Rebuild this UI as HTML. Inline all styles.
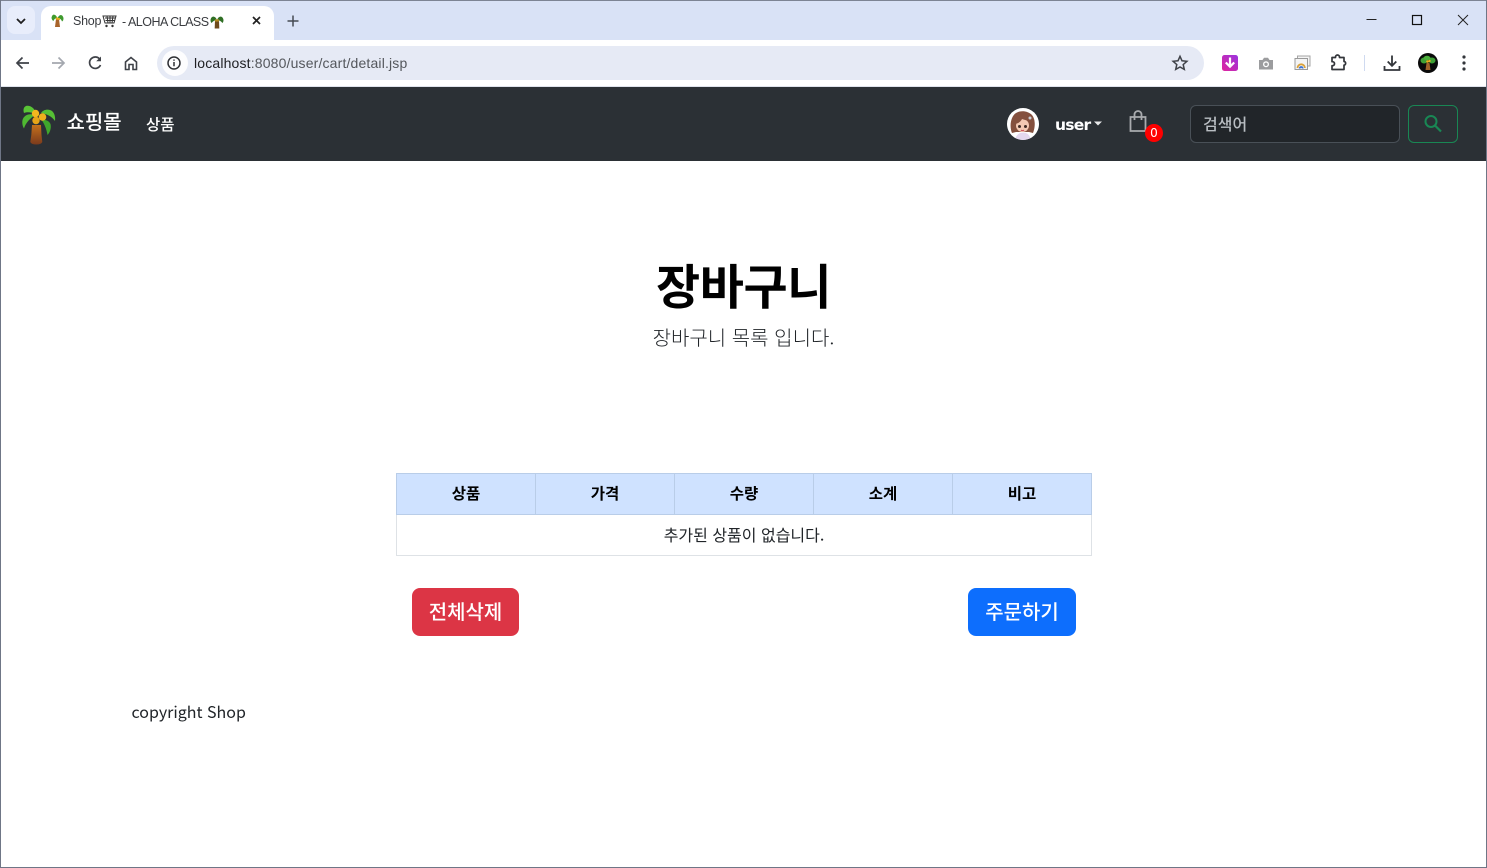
<!DOCTYPE html>
<html lang="ko"><head><meta charset="utf-8"><title>Shop - ALOHA CLASS</title>
<style>
*{box-sizing:border-box}
html,body{margin:0;padding:0;width:1487px;height:868px;overflow:hidden;background:#fff}
body{position:relative;font-family:"Liberation Sans","Noto Sans CJK KR",sans-serif;color:#212529}
.a{position:absolute;white-space:nowrap}
.k{font-family:"Noto Sans CJK KR","Liberation Sans",sans-serif}
svg{position:absolute;overflow:visible}
.th{position:absolute;top:474px;height:40px;width:139px;background:#cfe2ff;border-right:1px solid #b9cde8;text-align:center;font:700 15.5px/39px "Noto Sans CJK KR",sans-serif;color:#000}
.btn{position:absolute;top:588px;height:48px;border-radius:8px;color:#fff;text-align:center;font:500 20px/46px "Noto Sans CJK KR",sans-serif}
</style></head><body>
<!-- chrome top -->
<div class="a" style="left:0;top:0;width:1487px;height:40px;background:#d9e2f6"></div>
<div class="a" style="left:0;top:0;width:1487px;height:1px;background:#7d8494"></div>
<div class="a" style="left:7px;top:6px;width:28px;height:28px;border-radius:8px;background:#e8edfb"></div>
<svg style="left:0;top:0" width="60" height="40"><path d="M17 19l4 4 4-4" fill="none" stroke="#1f1f1f" stroke-width="1.8"/></svg>
<div class="a" style="left:41px;top:6px;width:233px;height:36px;background:#fff;border-radius:10px 10px 0 0"></div>
<svg style="left:51px;top:13px" width="13" height="15" viewBox="0 0 13 15"><path d="M5 6h3l1 8H4z" fill="#a8642a"/><path d="M6.500 5C4 0 1 1 .5 5 1 7 2 8 2.500 8 3 6 5 5 6.500 5zM6.500 5c2-4 5-4 6 0 0 2-.5 3-1.500 3.500C10.500 6.500 8.500 5 6.500 5z" fill="#3f9a2e"/><circle cx="6" cy="5.500" r="1.300" fill="#e6ad1f"/><circle cx="8" cy="6" r="1.100" fill="#e6ad1f"/></svg>
<div class="a" style="left:73px;top:13px;font-size:12.5px;line-height:16px;color:#3a3c40;letter-spacing:-.25px">Shop</div>
<svg style="left:102px;top:15px" width="15" height="13" viewBox="0 0 15 13"><path d="M1 1h13l-2 7H3zM3 3h10M3.500 5.500h9M5 1l1 7M8 1v7M11 1l-1 7" fill="none" stroke="#333" stroke-width="1"/><circle cx="4.500" cy="11" r="1.200" fill="#333"/><circle cx="10.500" cy="11" r="1.200" fill="#333"/></svg>
<div class="a" style="left:122px;top:14px;font-size:12.5px;line-height:16px;color:#3a3c40;letter-spacing:-.5px">- ALOHA CLASS</div>
<svg style="left:210px;top:15px" width="14" height="14" viewBox="0 0 14 14"><path d="M5 5h4l.3 8.500H4.700z" fill="#6e4a1c"/><path d="M7 5C5 0 1 1 .5 5c0 1.500 .5 2.500 1 3C3 6 5 5 7 5c2 0 4 1 5.500 3 .5-.5 1-1.500 1-3C13 1 9 0 7 5z" fill="#2f6f25"/><circle cx="6" cy="5.500" r="1.200" fill="#b48a20"/><circle cx="8" cy="5.500" r="1.200" fill="#b48a20"/></svg>
<svg style="left:250px;top:14px" width="13" height="13"><path d="M3 3l7 7M10 3l-7 7" stroke="#222" stroke-width="1.700"/></svg>
<svg style="left:286px;top:14px" width="14" height="14"><path d="M7 1.500v11M1.500 7h11" stroke="#454a52" stroke-width="1.500"/></svg>
<svg style="left:1360px;top:10px" width="120" height="20"><path d="M6.500 9.500h10" stroke="#222" stroke-width="1"/><rect x="52.500" y="5.500" width="9" height="9" fill="none" stroke="#111" stroke-width="1.200"/><path d="M98 5l10 10M108 5l-10 10" stroke="#222" stroke-width="1"/></svg>
<!-- toolbar -->
<div class="a" style="left:0;top:40px;width:1487px;height:47px;background:#fff;border-radius:9px 9px 0 0"></div>
<div class="a" style="left:0;top:86px;width:1487px;height:1px;background:#dfe3ec"></div>
<svg style="left:14px;top:53px" width="130" height="20" fill="none"><path d="M15 10H3M8.500 4.500L3 10l5.500 5.500" stroke="#3f4248" stroke-width="1.700"/><path d="M38 10h12M44.500 4.500L50 10l-5.500 5.500" stroke="#a4a8af" stroke-width="1.700"/><path d="M86 6.500A5.700 5.700 0 1 0 86.500 12" stroke="#3f4248" stroke-width="1.700"/><path d="M87 3.500v4.800h-4.800z" fill="#3f4248"/><path d="M111.500 16.500V9l5.500-4.500L122.500 9v7.500h-3.500V11.500h-4v5z" stroke="#3f4248" stroke-width="1.600"/></svg>
<div class="a" style="left:157px;top:46px;width:1047px;height:34px;border-radius:17px;background:#e6eaf5"></div>
<div class="a" style="left:162px;top:50px;width:26px;height:26px;border-radius:13px;background:#fdfdfe"></div>
<svg style="left:166px;top:55px" width="16" height="16"><circle cx="8" cy="8" r="6" fill="none" stroke="#2f3135" stroke-width="1.500"/><path d="M8 7v4.200M8 4.500v1.300" stroke="#2f3135" stroke-width="1.500"/></svg>
<div class="a" style="left:194px;top:54px;font-size:14px;line-height:18px;color:#202124;letter-spacing:.16px">localhost<span style="color:#54575c">:8080/user/cart/detail.jsp</span></div>
<svg style="left:1171px;top:54px" width="18" height="18"><path d="M9 2.300l2 4.500 4.900.5-3.700 3.300 1.100 4.800L9 13l-4.300 2.400 1.100-4.800L2.100 7.300 7 6.800z" fill="none" stroke="#3f4248" stroke-width="1.500"/></svg>
<svg style="left:1222px;top:55px" width="16" height="16"><defs><linearGradient id="g" x1="0" y1="1" x2="1" y2="0"><stop offset="0" stop-color="#e0259c"/><stop offset="1" stop-color="#9a35e0"/></linearGradient></defs><rect width="16" height="16" rx="2.500" fill="url(#g)"/><path d="M8 2.500v9M3.800 7.500L8 11.700l4.200-4.200" fill="none" stroke="#fff" stroke-width="2.200"/></svg>
<svg style="left:1258px;top:55px" width="16" height="16"><path d="M1 5h3.500L6 2.800h4L11.500 5H15v9.500H1z" fill="#9b9c9e"/><circle cx="8" cy="9.300" r="3" fill="#fff"/><circle cx="8" cy="9.300" r="1.700" fill="#9b9c9e"/></svg>
<svg style="left:1294px;top:55px" width="17" height="16" fill="none"><rect x="3.500" y="1" width="12.500" height="10" fill="#f4f4f4" stroke="#a5a5a5"/><rect x="1" y="3.500" width="12.500" height="11" fill="#f4f4f4" stroke="#9a9a9a"/><path d="M3.500 13a3.700 3.700 0 0 1 7.400 0" stroke="#d9a13a" stroke-width="1.800"/><path d="M5.700 13.500a1.500 1.500 0 0 1 3 0" stroke="#3a72d5" stroke-width="1.800"/></svg>
<svg style="left:1330px;top:54px" width="18" height="18"><path d="M2 3.500h3.500V3a2 2 0 0 1 4 0v.5h4.500V7.500h.5a2 2 0 0 1 0 3.600h-.5V15.500H2v-3.800h.5a2 2 0 0 0 0-4H2z" fill="none" stroke="#33363b" stroke-width="1.700" stroke-linejoin="round"/></svg>
<div class="a" style="left:1364px;top:55px;width:1px;height:16px;background:#cfdaf0"></div>
<svg style="left:1383px;top:54px" width="18" height="18" fill="none"><path d="M9 1.500v10M4.700 7.500L9 11.800l4.300-4.300M1.500 12v4h15v-4" stroke="#33363b" stroke-width="1.800"/></svg>
<div class="a" style="left:1418px;top:53px;width:20px;height:20px;border-radius:50%;background:#0a0a0a"></div>
<svg style="left:1418px;top:53px" width="20" height="20"><path d="M8.500 10h3l1 7h-5z" fill="#a0622a"/><ellipse cx="6" cy="7.500" rx="3.500" ry="3" fill="#3da035"/><ellipse cx="14" cy="7.500" rx="3.500" ry="3" fill="#3da035"/><ellipse cx="9" cy="5" rx="3.500" ry="2.200" fill="#4caf3c"/><circle cx="9.500" cy="8.500" r="1.300" fill="#e8b020"/><circle cx="11.500" cy="8" r="1.200" fill="#e8b020"/></svg>
<svg style="left:1460px;top:54px" width="8" height="18"><circle cx="4" cy="3" r="1.600" fill="#33363b"/><circle cx="4" cy="9" r="1.600" fill="#33363b"/><circle cx="4" cy="15" r="1.600" fill="#33363b"/></svg>
<!-- navbar -->
<div class="a" style="left:1px;top:87px;width:1485px;height:74px;background:#2b3035"></div>
<svg style="left:20px;top:103px" width="37" height="42" viewBox="0 0 37 42"><defs><linearGradient id="t" x1="0" y1="0" x2="0" y2="1"><stop offset="0" stop-color="#c4701c"/><stop offset="1" stop-color="#7a3a1c"/></linearGradient></defs><path d="M12 22h9l.5 10 .8 7q-1 2.500-6 2.500t-6-2.500l1-7z" fill="url(#t)"/><path d="M16 11C15 5 10 2 6 3 3.500 4 3 7 4 10c4-1.500 8-.5 12 1z" fill="#59c436"/><path d="M15 12C9 10 4 12 2.500 17c-.6 3 0 6 1.500 8.500C5.500 20 10 15.500 15 12z" fill="#4fb832"/><path d="M21 10c3-4 8-4 11-2 2.500 2 3.500 6 3 10-3.500-5-8.500-7-14-8z" fill="#56bf35"/><path d="M21 16c4 1 7.500 1 9.500 5 1 4-.5 8.500-3 11-1-6-3-11-6.500-16z" fill="#3fa72c"/><circle cx="15.500" cy="10.500" r="3.700" fill="#f2b71f"/><circle cx="22.500" cy="14" r="3.800" fill="#eeb01d"/><circle cx="16" cy="17.500" r="3.700" fill="#e6a418"/></svg>
<div class="a k" style="left:66.500px;top:106px;font-size:20px;line-height:30px;color:#fff;font-weight:500">쇼핑몰</div>
<div class="a k" style="left:146px;top:113px;font-size:15.500px;line-height:23px;color:#fff;font-weight:500">상품</div>
<div class="a" style="left:1007px;top:108px;width:32px;height:32px;border-radius:50%;background:#fff;overflow:hidden">
<svg style="left:0;top:0" width="32" height="32" viewBox="0 0 32 32"><path d="M5 25C2 18 4 8 9 5c5-3 12-2 16 2 4 5 3 13 1 18l-4-1H9z" fill="#84503e"/><circle cx="15.500" cy="17.500" r="6.500" fill="#f3c9b4"/><path d="M8 16c1-6 9-9 15-3-4-.5-6-1.500-8-2-1.500 3-4 4.500-7 5z" fill="#84503e"/><circle cx="12.500" cy="18.500" r="1.500" fill="#3e2a25"/><circle cx="18.500" cy="18.500" r="1.500" fill="#3e2a25"/><path d="M14 22q1.500 1.300 3 0" stroke="#cc4a55" fill="none"/><circle cx="23" cy="10" r="1.500" fill="#c8ccd4"/><path d="M8 32c1-5 4-7.500 8-7.500s7 2.500 8 7.500z" fill="#e4d8ef"/></svg></div>
<div class="a" style="left:1055px;top:115px;font:700 15.500px/20px 'DejaVu Sans',sans-serif;color:#fff;letter-spacing:-.75px">user</div>
<svg style="left:1094px;top:121px" width="8" height="5"><path d="M0 .5h8L4 4.500z" fill="#e8e9ea"/></svg>
<svg style="left:1129px;top:110px" width="18" height="22" fill="none"><path d="M1.500 7h15v14h-15zM5.500 10V4.500a3.500 3.500 0 0 1 7 0V10" stroke="#a9abae" stroke-width="1.800"/></svg>
<div class="a" style="left:1145px;top:124px;width:18px;height:18px;border-radius:50%;background:#f00;color:#fff;text-align:center;font:400 12px/18px 'DejaVu Sans',sans-serif">0</div>
<div class="a k" style="left:1190px;top:105px;width:210px;height:38px;border-radius:6px;border:1px solid #495057;background:#212529;padding-left:12px;font-size:16px;line-height:35px;color:#b8bdc2;font-weight:500">검색어</div>
<div class="a" style="left:1408px;top:105px;width:50px;height:38px;border-radius:6px;border:1px solid #198754"></div>
<svg style="left:1423px;top:114px" width="20" height="20" fill="none"><circle cx="8" cy="7.500" r="5.500" stroke="#198754" stroke-width="2"/><path d="M12 11.500l6 6" stroke="#198754" stroke-width="2.200"/></svg>
<!-- heading -->
<div class="a k" style="left:0;top:247px;width:1487px;text-align:center;font-size:48px;line-height:72px;font-weight:700;color:#000;letter-spacing:-.4px">장바구니</div>
<div class="a k" style="left:0;top:322px;width:1487px;text-align:center;font-size:20px;line-height:30px;font-weight:300;color:#212529">장바구니 목록 입니다.</div>
<!-- table -->
<div class="a" style="left:396px;top:473px;width:696px;height:83px;border:1px solid #dee2e6;border-top-color:#b9cde8"></div>
<div class="th" style="left:397px">상품</div>
<div class="th" style="left:536px">가격</div>
<div class="th" style="left:675px">수량</div>
<div class="th" style="left:814px">소계</div>
<div class="th" style="left:953px;width:138px;border-right:0">비고</div>
<div class="a" style="left:396px;top:514px;width:696px;height:1px;background:#b9cde8"></div>
<div class="a" style="left:396px;top:473px;width:1px;height:42px;background:#b9cde8"></div>
<div class="a" style="left:1091px;top:473px;width:1px;height:42px;background:#b9cde8"></div>
<div class="a k" style="left:396px;top:522px;width:696px;text-align:center;font-size:16px;line-height:24px;color:#212529">추가된 상품이 없습니다.</div>
<!-- buttons -->
<div class="btn" style="left:412px;width:107px;background:#dc3545">전체삭제</div>
<div class="btn" style="left:968px;width:108px;background:#0d6efd">주문하기</div>
<div class="a" style="left:131.500px;top:700px;font:400 16px/22px 'Noto Sans CJK KR','DejaVu Sans',sans-serif;color:#212529">copyright Shop</div>
<!-- window frame -->
<div class="a" style="left:0;top:0;width:1px;height:868px;background:#6f7686"></div>
<div class="a" style="left:1486px;top:0;width:1px;height:868px;background:#6f7686"></div>
<div class="a" style="left:0;top:867px;width:1487px;height:1px;background:#6f7686"></div>
</body></html>
